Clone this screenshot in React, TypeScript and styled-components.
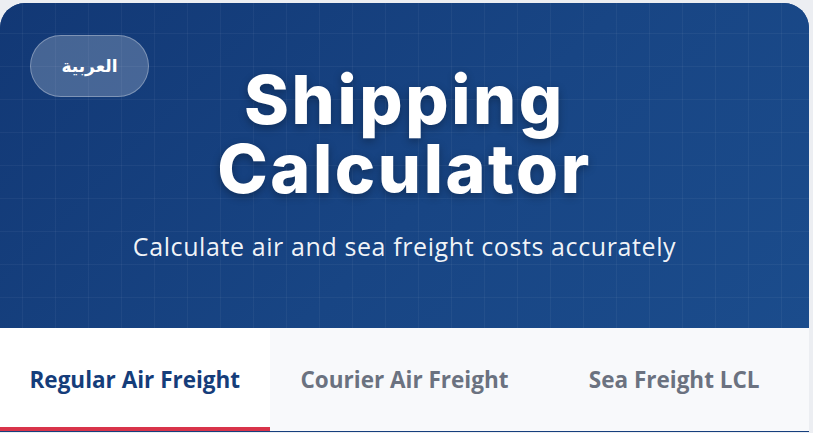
import React, { useState } from 'react';
import styled, { createGlobalStyle } from 'styled-components';

const GlobalStyle = createGlobalStyle`
  html, body {
    margin: 0;
    padding: 0;
    background: #eceef2;
    font-family: 'Open Sans', 'Noto Sans', sans-serif;
  }
`;

const Card = styled.div`
  width: calc(100% - 4px);
  margin-top: 3px;
  border-radius: 25px 25px 0 0;
  overflow: hidden;
  background: #ffffff;
`;

const Hero = styled.header`
  position: relative;
  height: 325px;
  box-sizing: border-box;
  padding-top: 62px;
  display: flex;
  flex-direction: column;
  align-items: center;
  color: #ffffff;
  background-color: #163f7d;
  background-image:
    linear-gradient(rgba(255, 255, 255, 0.045) 1px, transparent 1px),
    linear-gradient(90deg, rgba(255, 255, 255, 0.045) 1px, transparent 1px),
    linear-gradient(135deg, #123875 0%, #184584 55%, #1b4c8c 100%);
  background-size: 33px 33px, 33px 33px, 100% 100%;
  background-position: 22px 30px, 22px 30px, 0 0;
`;

const LangButton = styled.button`
  position: absolute;
  left: 30px;
  top: 32px;
  width: 119px;
  height: 62px;
  border-radius: 31px;
  border: 1.5px solid rgba(255, 255, 255, 0.3);
  background: rgba(255, 255, 255, 0.22);
  color: #ffffff;
  font-family: 'DejaVu Sans', 'Noto Sans', sans-serif;
  font-weight: 700;
  font-size: 17px;
  cursor: pointer;
`;

const Title = styled.h1`
  margin: 0;
  font-family: 'Inter', 'Lato', sans-serif;
  font-weight: 800;
  font-size: 68px;
  line-height: 69px;
  letter-spacing: 2.6px;
  text-align: center;
  text-shadow: 0 3px 8px rgba(0, 0, 0, 0.3);
`;

const Subtitle = styled.p`
  margin: 26px 0 0;
  font-family: 'Open Sans', 'Noto Sans', sans-serif;
  font-size: 25px;
  letter-spacing: 0.6px;
  font-weight: 400;
  color: rgba(255, 255, 255, 0.95);
`;

const TabBar = styled.nav`
  display: grid;
  grid-template-columns: repeat(3, 1fr);
  background: #f8f9fb;
  border-bottom: 1px solid #163f7d;
`;

const Tab = styled.button<{ $active?: boolean }>`
  position: relative;
  height: 103px;
  border: none;
  padding: 0 0 1px;
  background: ${(p) => (p.$active ? '#ffffff' : '#f8f9fb')};
  color: ${(p) => (p.$active ? '#153d7a' : '#6b7280')};
  font-family: 'Open Sans', 'Noto Sans', sans-serif;
  font-weight: 700;
  font-size: 22.5px;
  cursor: pointer;

  &::after {
    content: '';
    display: ${(p) => (p.$active ? 'block' : 'none')};
    position: absolute;
    left: 0;
    right: 0;
    bottom: 0;
    height: 4px;
    background: #d9344a;
  }
`;

const tabs = ['Regular Air Freight', 'Courier Air Freight', 'Sea Freight LCL'];

const App = () => {
  const [active, setActive] = useState(0);
  return (
    <>
      <GlobalStyle />
      <Card>
        <Hero>
          <LangButton>العربية</LangButton>
          <Title>
            Shipping
            <br />
            Calculator
          </Title>
          <Subtitle>Calculate air and sea freight costs accurately</Subtitle>
        </Hero>
        <TabBar>
          {tabs.map((t, i) => (
            <Tab key={t} $active={i === active} onClick={() => setActive(i)}>
              {t}
            </Tab>
          ))}
        </TabBar>
      </Card>
    </>
  );
};

export default App;
